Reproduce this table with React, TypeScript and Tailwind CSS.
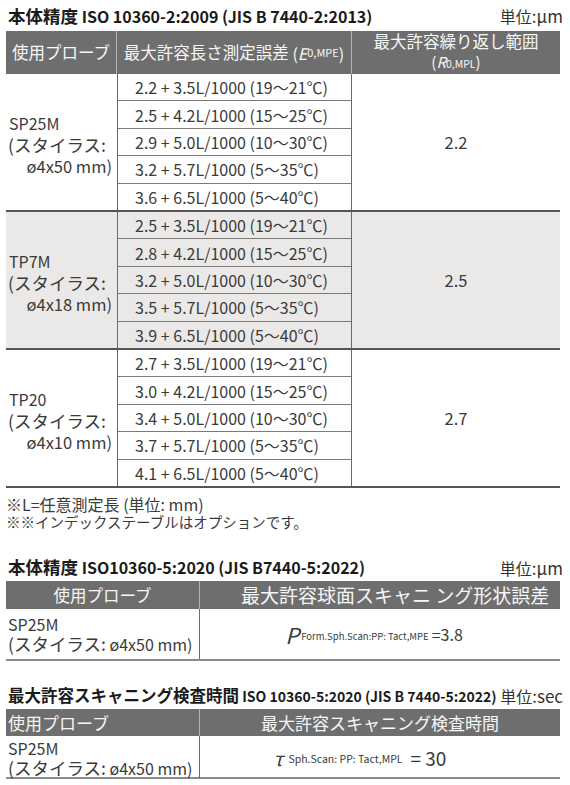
import React from "react";

const jp = "font-['Noto_Sans_CJK_JP',sans-serif]";

type Group = {
	probe: string;
	stylus: string;
	value: string;
	shaded?: boolean;
	rows: string[];
};

const groups: Group[] = [
	{
		probe: "SP25M",
		stylus: "ø4x50 mm)",
		value: "2.2",
		rows: [
			"2.2 + 3.5L/1000 (19〜21℃)",
			"2.5 + 4.2L/1000 (15〜25℃)",
			"2.9 + 5.0L/1000 (10〜30℃)",
			"3.2 + 5.7L/1000 (5〜35℃)",
			"3.6 + 6.5L/1000 (5〜40℃)",
		],
	},
	{
		probe: "TP7M",
		stylus: "ø4x18 mm)",
		value: "2.5",
		shaded: true,
		rows: [
			"2.5 + 3.5L/1000 (19〜21℃)",
			"2.8 + 4.2L/1000 (15〜25℃)",
			"3.2 + 5.0L/1000 (10〜30℃)",
			"3.5 + 5.7L/1000 (5〜35℃)",
			"3.9 + 6.5L/1000 (5〜40℃)",
		],
	},
	{
		probe: "TP20",
		stylus: "ø4x10 mm)",
		value: "2.7",
		rows: [
			"2.7 + 3.5L/1000 (19〜21℃)",
			"3.0 + 4.2L/1000 (15〜25℃)",
			"3.4 + 5.0L/1000 (10〜30℃)",
			"3.7 + 5.7L/1000 (5〜35℃)",
			"4.1 + 6.5L/1000 (5〜40℃)",
		],
	},
];

const Unit = ({ unit }: { unit: string }) => (
	<span className={jp + " whitespace-nowrap text-[16px] leading-none text-[#333]"}>
		単位<span className="text-[17px]">:{unit}</span>
	</span>
);

const Stylus = () => (
	<span className="whitespace-nowrap">
		<span className="text-[17.5px]">(スタイラス:</span>
		<span className="text-[16px]"> ø4x50 mm)</span>
	</span>
);

const App = () => {
	return (
		<div className={jp + " w-[570px] bg-white pl-[6px] pr-[10px] text-[#3a3a3a]"}>
			{/* title 1 */}
			<div className="-mr-[3px] flex h-[31px] items-center justify-between pl-[2px]">
				<h2 className="whitespace-nowrap font-bold leading-none text-[#1a1a1a]">
					<span className="text-[17.5px]">本体精度</span>
					<span className="text-[16px]"> ISO 10360-2:2009 (JIS B 7440-2:2013)</span>
				</h2>
				<Unit unit="μm" />
			</div>

			{/* table 1 */}
			<div className="grid h-[43px] grid-cols-[111px_235px_1fr] bg-[#6e6e6e] text-[#f7f7f7]">
				<div className="flex items-center justify-center border-r border-[#b4b4b4] text-[16.5px]">
					使用プローブ
				</div>
				<div className="flex items-center justify-center whitespace-nowrap border-r border-[#b4b4b4] leading-none">
					<span className="text-[16.5px]">最大許容長さ測定誤差</span>
					<span className="text-[16px]">&nbsp;(</span>
					<span className="text-[16px] italic">E</span>
					<span className="text-[11px]">0,MPE</span>
					<span className="text-[16px]">)</span>
				</div>
				<div className="flex flex-col items-center justify-center leading-[20px]">
					<span className="text-[16.5px]">最大許容繰り返し範囲</span>
					<span className="whitespace-nowrap">
						<span className="text-[15px]">(</span>
						<span className="text-[15px] italic">R</span>
						<span className="text-[10.5px]">0,MPL</span>
						<span className="text-[15px]">)</span>
					</span>
				</div>
			</div>

			{groups.map((g) => (
				<div
					key={g.probe}
					className={
						"grid h-[138px] grid-cols-[111px_235px_1fr] border-b-2 border-[#555] " +
						(g.shaded ? "bg-[#ebe9e7]" : "bg-white")
					}>
					<div className="flex flex-col justify-center pr-[5px] pt-[6px] leading-[21.5px]">
						<span className="pl-[3px] text-[16px]">{g.probe}</span>
						<span className="pl-[2px] text-[17.5px]">(スタイラス:</span>
						<span className="text-right text-[16.5px]">{g.stylus}</span>
					</div>
					<div className="flex flex-col border-x-[1.5px] border-[#6a6a6a]">
						{g.rows.map((r, i) => (
							<div
								key={r}
								className={
									"flex min-h-0 flex-1 items-center pl-[17px] " +
									(i < 4 ? "border-b-[1.5px] border-[#7a7a7a]" : "")
								}>
								<span className="whitespace-nowrap text-[16px] leading-none">{r}</span>
							</div>
						))}
					</div>
					<div className="flex items-center justify-center text-[16.5px]">{g.value}</div>
				</div>
			))}

			{/* notes */}
			<div className="mt-[8px] leading-[17px]">
				<p className="whitespace-nowrap text-[16px]">※L=任意測定長 (単位: mm)</p>
				<p className="whitespace-nowrap text-[14.5px]">※※インデックステーブルはオプションです。</p>
			</div>

			{/* title 2 */}
			<div className="-mr-[3px] mt-[23px] flex h-[28px] items-center justify-between pl-[2px]">
				<h2 className="whitespace-nowrap font-bold leading-none text-[#1a1a1a]">
					<span className="text-[17.5px]">本体精度</span>
					<span className="text-[16px]"> ISO10360-5:2020 (JIS B7440-5:2022)</span>
				</h2>
				<Unit unit="μm" />
			</div>

			{/* table 2 */}
			<div className="grid h-[28px] grid-cols-[194px_1fr] bg-[#6e6e6e] text-[#f7f7f7]">
				<div className="flex items-center justify-center border-r border-[#b4b4b4] text-[16.5px]">
					使用プローブ
				</div>
				<div className="flex items-center whitespace-nowrap pl-[41px] text-[19px]">
					最大許容球面スキャニ ング形状誤差
				</div>
			</div>
			<div className="grid h-[52px] grid-cols-[194px_1fr] border-b-2 border-[#8a8a8a]">
				<div className="flex flex-col justify-center border-r-[1.5px] border-[#6a6a6a] pl-[2px] leading-[20px]">
					<span className="text-[16px]">SP25M</span>
					<Stylus />
				</div>
				<div className="flex items-center justify-center whitespace-nowrap pr-[12px] leading-none">
					<span className="text-[22px] italic">P</span>
					<span className="ml-[2px] translate-y-[3px] text-[9.5px]">Form.Sph.Scan:PP: Tact,MPE</span>
					<span className="ml-[3px] text-[16px]">=3.8</span>
				</div>
			</div>

			{/* title 3 */}
			<div className="-mr-[3px] mt-[22px] flex h-[24px] items-center justify-between pl-[2px]">
				<h2 className="whitespace-nowrap font-bold leading-none text-[#1a1a1a]">
					<span className="text-[16.5px]">最大許容スキャニング検査時間</span>
					<span className="text-[14px]"> ISO 10360-5:2020 (JIS B 7440-5:2022)</span>
				</h2>
				<Unit unit="sec" />
			</div>

			{/* table 3 */}
			<div className="mt-[2px] grid h-[27px] grid-cols-[194px_1fr] bg-[#6e6e6e] text-[#f7f7f7]">
				<div className="flex items-center border-r border-[#b4b4b4] pl-[2px] text-[17px]">使用プローブ</div>
				<div className="flex items-center justify-center text-[17px]">最大許容スキャニング検査時間</div>
			</div>
			<div className="grid h-[43px] grid-cols-[194px_1fr] border-b-2 border-[#8a8a8a]">
				<div className="flex flex-col justify-center border-r-[1.5px] border-[#6a6a6a] pl-[2px] pt-[3px] leading-[19px]">
					<span className="text-[16px]">SP25M</span>
					<Stylus />
				</div>
				<div className="flex items-center justify-center whitespace-nowrap pr-[40px] leading-none">
					<span className="text-[19px] italic">τ</span>
					<span className="ml-[5px] translate-y-[2px] text-[10.5px]">Sph.Scan: PP: Tact,MPL</span>
					<span className="ml-[8px] text-[19px]">= 30</span>
				</div>
			</div>
		</div>
	);
};

export default App;
